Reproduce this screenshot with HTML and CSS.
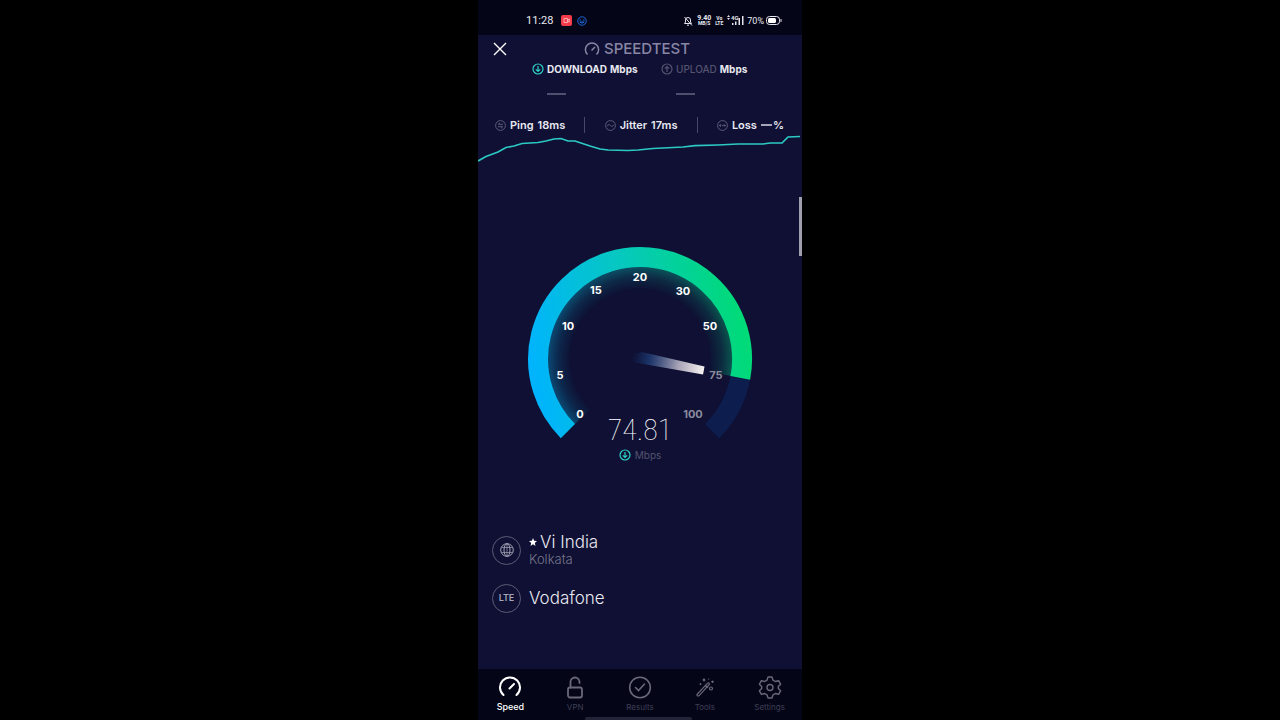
FILE: index.html
```html
<!DOCTYPE html>
<html lang="en">
	<head>
		<meta charset="UTF-8">
		<title>Speedtest</title>
		<link rel="stylesheet" href="styles.css">
	</head>
	<body>
		<div id="phone">
			<div class="status">
				<span class="time">11:28</span>
				<svg class="rec" width="11" height="11" viewBox="0 0 11 11">
					<rect width="11" height="11" rx="2" fill="#f43b4b"/>
					<path d="M3 3.500h3.500v4H3zM6.500 5.200L8.300 4v3L6.500 5.800" fill="none" stroke="#ffc4c8" stroke-width=".8"/>
				</svg>
				<svg class="face" width="10" height="10" viewBox="0 0 10 10" fill="none" stroke="#1e66d8">
					<circle cx="5" cy="5" r="4.200"/>
					<path d="M2.500 4h1.700M5.800 4h1.700M2.800 6q2.200 2.400 4.400 0z"/>
				</svg>
				<span class="space"></span>
				<svg class="bell" width="10" height="10" viewBox="0 0 10 10" fill="none" stroke="#e4e4ec">
					<path d="M1.500 7.500h7L7.500 6V4A2.500 2.500 0 0 0 2.500 4v2zM4 9.200h2M1.500 1l7.500 8.500"/>
				</svg>
				<span class="rate"><b>9.40</b><b>MB/S</b></span>
				<span class="volte"><b>Vo</b><b>LTE</b></span>
				<svg class="signal" width="17" height="11" viewBox="0 0 17 11" fill="#e4e4ec">
					<path d="M1.500 0L3 2H0zM1.500 5L0 3h3z"/>
					<text x="4" y="5">4G</text>
					<path d="M5 8h1.500v2H5zM8 6.500h1.500V10H8zM11.500 3H13v7h-1.500zM15 1h1.500v9H15z"/>
				</svg>
				<span class="percent">70%</span>
				<svg width="16" height="9" viewBox="0 0 16 9">
					<rect x=".5" y=".5" width="13" height="8" rx="3" fill="none" stroke="#e4e4ec"/>
					<rect x="2" y="2" width="8" height="5" rx="1.500" fill="#fff"/>
					<path d="M15 3v3" stroke="#e4e4ec"/>
				</svg>
			</div>

			<div class="header">
				<button class="close" aria-label="Close">
					<svg width="14" height="14" viewBox="0 0 14 14"><path d="M1 1l12 12M13 1L1 13" stroke="#fff" stroke-width="1.400"/></svg>
				</button>
				<h1>
					<svg width="16" height="14" viewBox="0 0 16 14" fill="none" stroke="#8886a5" stroke-width="1.500">
						<path d="M3.500 12.500A6.600 6.600 0 1 1 12.500 12.500M7.500 8.500l3.500-3.500"/>
					</svg>
					SPEEDTEST
				</h1>
			</div>

			<div class="results">
				<div class="result">
					<p>
						<svg width="12" height="12" viewBox="0 0 12 12" fill="none" stroke="#2dd3c5" stroke-width="1.200"><circle cx="6" cy="6" r="5"/><path d="M6 3v5.500M3.800 6.300L6 8.500l2.200-2.200"/></svg>
						<span>DOWNLOAD</span> Mbps
					</p>
					<div class="dash"></div>
				</div>
				<div class="result">
					<p>
						<svg width="12" height="12" viewBox="0 0 12 12" fill="none" stroke="#54536f" stroke-width="1.200"><circle cx="6" cy="6" r="5"/><path d="M6 9V3.500M3.800 5.700L6 3.500l2.200 2.200"/></svg>
						<span class="dim">UPLOAD</span> Mbps
					</p>
					<div class="dash"></div>
				</div>
			</div>

			<div class="stats">
				<div class="stat">
					<svg width="11" height="11" viewBox="0 0 11 11"><circle cx="5.500" cy="5.500" r="4.900"/><path d="M8 4.300H3.300L5 2.700M3 6.700h4.700L6 8.300"/></svg>
					<span>Ping</span><span>18ms</span>
				</div>
				<div class="line"></div>
				<div class="stat">
					<svg width="11" height="11" viewBox="0 0 11 11"><circle cx="5.500" cy="5.500" r="4.900"/><path d="M2.300 6.200C3.300 4 4.500 4.200 5.500 5.500S7.700 7 8.700 4.800"/></svg>
					<span>Jitter</span><span>17ms</span>
				</div>
				<div class="line"></div>
				<div class="stat">
					<svg width="11" height="11" viewBox="0 0 11 11"><circle cx="5.500" cy="5.500" r="4.900"/><path d="M2 5.500h2M5 5.500h1M7 5.500h2M4 4.200L2.700 5.500 4 6.800M7 4.200v2.600"/></svg>
					<span>Loss</span><span class="none"><i></i>%</span>
				</div>
			</div>

			<svg class="graph" viewBox="0 0 324 30" fill="none">
				<path d="M0 26L8 21.500 20 17 28 12.500 36 11 44 8.500 60 7.500 68 6 76 4 83 3.500 90 6H97L112 11 122 14 130 15 150 15.500 160 15 175 13.500 205 12 217 10.700 240 10 260 9H285L292 8H304L310 2 322 1.500" stroke="#2cc9c4" stroke-width="1.700"/>
			</svg>

			<div class="gauge">
				<svg class="dial" viewBox="0 0 324 220">
					<defs>
						<linearGradient id="speed" gradientUnits="userSpaceOnUse" x1="55" y1="150" x2="270" y2="110">
							<stop offset="0" stop-color="#00b3ff"/>
							<stop offset=".5" stop-color="#06c8c0"/>
							<stop offset="1" stop-color="#00da78"/>
						</linearGradient>
						<radialGradient id="fade" gradientUnits="userSpaceOnUse" cx="162" cy="114" r="93">
							<stop offset=".74" stop-color="#fff" stop-opacity="0"/>
							<stop offset=".88" stop-color="#fff" stop-opacity=".14"/>
							<stop offset="1" stop-color="#fff" stop-opacity=".36"/>
						</radialGradient>
						<linearGradient id="tail" gradientUnits="userSpaceOnUse" x1="154" y1="112" x2="226" y2="125">
							<stop offset="0" stop-color="#123a78" stop-opacity="0"/>
							<stop offset=".25" stop-color="#24427c" stop-opacity=".75"/>
							<stop offset=".65" stop-color="#aaa5b7"/>
							<stop offset="1" stop-color="#f7f2f1"/>
						</linearGradient>
						<mask id="inside" maskUnits="userSpaceOnUse" x="0" y="0" width="324" height="220">
							<rect width="324" height="220" fill="url(#fade)"/>
						</mask>
					</defs>
					<!-- glow inside the ring -->
					<g mask="url(#inside)">
						<path d="M105.400 170.600A80 80 0 1 1 240.700 128.600" fill="none" stroke="url(#speed)" stroke-width="26"/>
					</g>
					<path d="M262.300 132.900A102 102 0 0 1 234.100 186.100" fill="none" stroke="#0d1d4d" stroke-width="20"/>
					<path d="M89.900 186.100A102 102 0 1 1 262.300 132.900" fill="none" stroke="url(#speed)" stroke-width="20"/>
					<path d="M154 109.500L164 107 226.500 121.500 225 129.500 154 117z" fill="url(#tail)"/>
					<g class="marks">
						<text x="102" y="173">0</text>
						<text x="82" y="134">5</text>
						<text x="90" y="85">10</text>
						<text x="118" y="49">15</text>
						<text x="162" y="36">20</text>
						<text x="205" y="50">30</text>
						<text x="232" y="85">50</text>
						<text x="238" y="134" class="off">75</text>
						<text x="215" y="173" class="off">100</text>
					</g>
				</svg>
				<div class="readout">
					<strong>74.81</strong>
					<p>
						<svg width="12" height="12" viewBox="0 0 12 12" fill="none" stroke="#2dd3c5" stroke-width="1.200"><circle cx="6" cy="6" r="5"/><path d="M6 3v5.500M3.800 6.300L6 8.500l2.200-2.200"/></svg>
						Mbps
					</p>
				</div>
			</div>

			<div class="hosts">
				<div class="host">
					<div class="round">
						<svg width="14" height="14" viewBox="0 0 14 14" fill="none" stroke="#a5a5b6"><circle cx="7" cy="7" r="6.300"/><ellipse cx="7" cy="7" rx="3" ry="6.300"/><path d="M7 .7v12.600M1.500 4.500h11M1.500 9.500h11" stroke-width=".7"/></svg>
					</div>
					<div>
						<h2><svg width="8" height="8" viewBox="0 0 8 8"><path d="M4 0l1.100 2.700L8 3 5.800 4.900 6.500 8 4 6.300 1.500 8l.7-3.100L0 3l2.900-.3z" fill="#fff"/></svg>Vi India</h2>
						<p>Kolkata</p>
					</div>
				</div>
				<div class="host">
					<div class="round">LTE</div>
					<h2>Vodafone</h2>
				</div>
			</div>

			<div class="nav">
				<a href="#" class="active">
					<svg width="24" height="24" viewBox="0 0 24 24" stroke-width="2"><path d="M5.500 20A10 10 0 1 1 18.500 20M11.500 13.500l4.500-4.500"/></svg>
					Speed
				</a>
				<a href="#">
					<svg width="24" height="24" viewBox="0 0 24 24" stroke-width="1.800"><rect x="5" y="12.500" width="14" height="10" rx="2"/><path d="M7.500 12.500V7a4.500 4.500 0 0 1 9 0v1"/></svg>
					VPN
				</a>
				<a href="#">
					<svg width="24" height="24" viewBox="0 0 24 24" stroke-width="1.600"><circle cx="12" cy="12.500" r="10.300"/><path d="M7.500 12.500l3 3 6-6.500"/></svg>
					Results
				</a>
				<a href="#">
					<svg width="24" height="24" viewBox="0 0 24 24" stroke-width="1.200"><path d="M4 19.500L14.500 8.200q1.800-1 2 1L6 20.800q-2 .8-2-1.300zM12.500 10.500l2 1.800"/><circle cx="18" cy="13.500" r="1.500"/><circle cx="11" cy="5" r=".8"/><path d="M19.500 6v1.500M18.700 6.700h1.600M7.500 8.500V9.500M7 9h1M15.500 4h.3"/></svg>
					Tools
				</a>
				<a href="#">
					<svg width="24" height="24" viewBox="0 0 24 24" stroke-width="1.400"><path d="M10 2h4l1 3.200 2.300 1.300 3.300-.8 2 3.500-2.300 2.400v1.800l2.300 2.400-2 3.500-3.300-.8L15 19.800 14 23h-4l-1-3.200-2.300-1.300-3.300.8-2-3.500 2.300-2.400v-1.800L1.400 9.200l2-3.500 3.300.8L9 5.200z" stroke-linejoin="round"/><circle cx="12" cy="12.500" r="3"/></svg>
					Settings
				</a>
			</div>
			<div class="thumb"></div>
			<div class="homebar"></div>
		</div>
	</body>
</html>
```
FILE: styles.css
```css
* {
	margin: 0;
	padding: 0;
	box-sizing: border-box;
}
body {
	background: #000;
	color: #e9e9f1;
	font-family: Inter, "Liberation Sans", sans-serif;
	font-size: 11px;
	line-height: 16px;
}
svg {
	display: block;
	flex: none;
}
#phone {
	position: relative;
	display: flex;
	flex-direction: column;
	max-width: 324px;
	min-height: 100vh;
	margin: 0 auto;
	background: #0f1033;
}

/* status bar */
.status {
	display: flex;
	align-items: center;
	padding: 6px 20px 0 48px;
	height: 35px;
	background: #040517;
	font-family: Roboto, sans-serif;
}
.time {
	font-size: 11px;
	margin-right: 8px;
}
.rec {
	margin-right: 5px;
}
.space {
	flex: 1;
}
.rate, .volte {
	display: flex;
	flex-direction: column;
	align-items: center;
	margin-left: 4px;
	font-size: 7px;
	line-height: 6px;
}
.rate b:last-child, .volte b {
	font-size: 5px;
	line-height: 5px;
}
.signal {
	margin: 0 3px 0 4px;
}
.signal text {
	font-size: 6px;
	font-weight: bold;
}
.percent {
	font-size: 9px;
	margin-right: 2px;
}

/* title */
.header {
	display: grid;
	grid-template-columns: 44px 1fr 50px;
	align-items: center;
	height: 27px;
}
.close {
	justify-self: center;
	background: none;
	border: 0;
}
h1 {
	display: flex;
	align-items: center;
	justify-content: center;
	gap: 4px;
	color: #8886a5;
	font-size: 15px;
	font-weight: 500;
}

/* download and upload */
.results {
	display: grid;
	grid-template-columns: 108px 1fr;
	gap: 21px;
	padding-left: 54px;
}
.result p {
	display: flex;
	align-items: center;
	gap: 3px;
	font-size: 10px;
	font-weight: 700;
	line-height: 14px;
	white-space: nowrap;
}
.dim {
	color: #54536f;
	font-weight: 500;
}
.dash {
	width: 19px;
	height: 2px;
	margin: 17px 0 0 15px;
	background: #4f4f70;
}
.stats {
	display: flex;
	align-items: center;
	justify-content: space-between;
	margin-top: 22px;
	padding: 0 18px 0 17px;
}
.stat {
	display: flex;
	align-items: center;
	gap: 4px;
	font-weight: 600;
}
.stat svg {
	fill: none;
	stroke: #5c5b7c;
}
.none {
	display: flex;
	align-items: center;
	gap: 1px;
}
.none i {
	width: 11px;
	height: 2px;
	background: #a5a5b9;
}
.line {
	width: 1px;
	height: 16px;
	background: #47486b;
}
.graph {
	width: 100%;
	margin-top: 2px;
}

/* gauge */
.gauge {
	display: grid;
	margin-top: 80px;
}
.dial, .readout {
	grid-area: 1 / 1;
}
.dial {
	width: 100%;
}
.marks {
	fill: #fff;
	font-size: 11px;
	font-weight: 700;
	text-anchor: middle;
}
.marks .off {
	fill: #8b8b9e;
}
.readout {
	align-self: end;
	text-align: center;
}
.readout strong {
	display: block;
	color: #fff;
	font-family: "Roboto Condensed", Roboto, sans-serif;
	font-size: 30px;
	font-weight: 100;
	line-height: 32px;
}
.readout p {
	display: flex;
	align-items: center;
	justify-content: center;
	gap: 4px;
	color: #54536f;
	font-size: 10px;
	padding: 1px 0 2px;
}

/* server and provider */
.hosts {
	flex: 1;
	padding: 68px 14px 40px;
}
.host {
	display: flex;
	align-items: center;
	gap: 8px;
	height: 34px;
	margin-bottom: 14px;
}
.round {
	display: flex;
	align-items: center;
	justify-content: center;
	width: 29px;
	height: 29px;
	border: 1px solid #5c5c78;
	border-radius: 50%;
	color: #a5a5b6;
	font-size: 9px;
	font-weight: 600;
}
h2 {
	display: flex;
	align-items: center;
	gap: 3px;
	font-size: 17px;
	font-weight: 300;
	line-height: 18px;
}
.host p {
	color: #77778d;
	font-size: 13px;
	font-weight: 300;
}

/* bottom menu */
.nav {
	display: grid;
	grid-template-columns: repeat(5, 1fr);
	height: 51px;
	padding-top: 6px;
	background: #040517;
}
.nav a {
	display: flex;
	flex-direction: column;
	align-items: center;
	color: #3f3f55;
	font-size: 8px;
	text-decoration: none;
}
.nav svg {
	fill: none;
	stroke: #686879;
	stroke-linecap: round;
}
.nav .active {
	color: #fff;
	font-weight: 500;
	font-size: 9px;
}
.nav .active svg {
	stroke: #fff;
}
.thumb {
	position: absolute;
	top: 197px;
	right: 0;
	width: 3px;
	height: 59px;
	background: #a09fb0;
}
.homebar {
	position: absolute;
	bottom: 0;
	left: 33%;
	width: 33%;
	height: 3px;
	border-radius: 2px 2px 0 0;
	background: #242438;
}
```
